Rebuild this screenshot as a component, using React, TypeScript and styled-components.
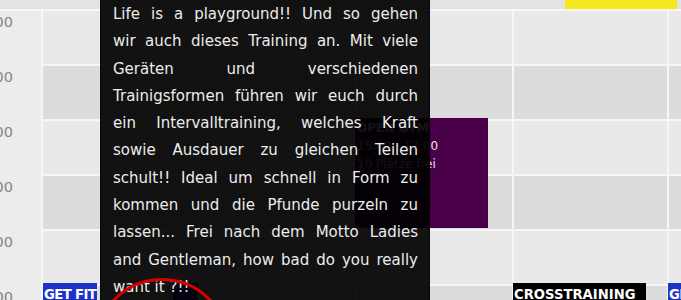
import React from 'react';
import styled, { createGlobalStyle } from 'styled-components';

const GlobalStyle = createGlobalStyle`
  html, body { margin: 0; padding: 0; background: #e9e9e9; }
  body { width: 681px; height: 300px; overflow: hidden; font-family: "DejaVu Sans", Verdana, sans-serif; }
`;

const Page = styled.div`
  position: relative;
  width: 681px;
  height: 300px;
  overflow: hidden;
  background: #e9e9e9;
`;

const Header = styled.div`
  height: 9px;
  background: #e3e3e3;
  display: flex;
  padding-left: 565px;
`;

const TodayMark = styled.div`
  width: 112px;
  background: #f6e81c;
`;

const Body = styled.div`
  display: flex;
  align-items: flex-start;
`;

const TimeCol = styled.div`
  width: 41px;
  flex: none;
  background: #ececec;
  border-top: 2px solid #f6f6f6;
  overflow: hidden;
`;

const TimeLabel = styled.div`
  height: 55px;
  box-sizing: border-box;
  padding: 2px 28px 0 0;
  display: flex;
  justify-content: flex-end;
  font-size: 14.5px;
  line-height: 18px;
  color: #858585;
  white-space: nowrap;
`;

const DayCol = styled.div<{ $w: number }>`
  position: relative;
  width: ${(p) => p.$w}px;
  flex: none;
  border-left: 2px solid #f6f6f6;
`;

const Slot = styled.div<{ $dark: boolean }>`
  height: 53px;
  border-top: 2px solid #f6f6f6;
  background: ${(p) => (p.$dark ? '#dcdcdc' : '#e9e9e9')};
`;

const Event = styled.div<{ $bg: string; $row: number; $left: number; $width?: number; $height: number }>`
  position: absolute;
  top: ${(p) => p.$row * 55 - 1}px;
  left: ${(p) => p.$left}px;
  width: ${(p) => (p.$width ? `${p.$width}px` : 'auto')};
  height: ${(p) => p.$height}px;
  background: ${(p) => p.$bg};
  box-sizing: border-box;
  color: #fff;
`;

const EventTitle = styled.div<{ $indent?: number; $tight?: boolean }>`
  font-weight: bold;
  font-size: 13.2px;
  line-height: 18px;
  letter-spacing: ${(p) => (p.$tight ? '-0.6px' : '0')};
  padding: 3px 1px 0 ${(p) => p.$indent ?? 1}px;
  white-space: nowrap;
`;

const GymBody = styled.div`
  padding: 1px 0 0 2px;
  font-size: 12px;
  line-height: 18px;
`;

const GymTitle = styled.div`
  font-weight: bold;
`;

const GymLine = styled.div`
  color: #e6e6e6;
`;

const Tooltip = styled.div`
  position: absolute;
  left: 100px;
  top: -10px;
  width: 330px;
  height: 340px;
  box-sizing: border-box;
  padding: 10px 11px 0 12px;
  background: rgba(0, 0, 0, 0.925);
  border: 1px solid rgba(0, 0, 0, 0.6);
  color: #ececec;
  font-size: 15px;
  line-height: 27.3px;
`;

const Line = styled.span<{ $last?: boolean }>`
  display: block;
  text-align: justify;
  text-align-last: ${(p) => (p.$last ? 'left' : 'justify')};
`;

const Ring = styled.div`
  position: absolute;
  left: 94px;
  top: 278px;
  width: 136px;
  height: 136px;
  box-sizing: border-box;
  border: 3px solid #d60000;
  border-radius: 50%;
`;

const times = ['13:00', '14:00', '15:00', '16:00', '17:00', '18:00'];
const widths = [155, 155, 155, 153, 20];

const lines = [
  'Life is a playground!! Und so gehen',
  'wir auch dieses Training an. Mit viele',
  'Geräten und verschiedenen',
  'Trainigsformen führen wir euch durch',
  'ein Intervalltraining, welches Kraft',
  'sowie Ausdauer zu gleichen Teilen',
  'schult!! Ideal um schnell in Form zu',
  'kommen und die Pfunde purzeln zu',
  'lassen... Frei nach dem Motto Ladies',
  'and Gentleman, how bad do you really',
  'want it ?!!',
];

function Slots() {
  return (
    <>
      {times.map((t, i) => (
        <Slot key={t} $dark={i % 2 === 1} />
      ))}
    </>
  );
}

export default function App() {
  return (
    <Page>
      <GlobalStyle />
      <Header>
        <TodayMark />
      </Header>
      <Body>
        <TimeCol>
          {times.map((t) => (
            <TimeLabel key={t}>{t}</TimeLabel>
          ))}
        </TimeCol>
        <DayCol $w={widths[0]}>
          <Slots />
          <Event $bg="#1d33c6" $row={5} $left={0} $height={50}>
            <EventTitle $tight>GET FIT</EventTitle>
          </Event>
          <Event $bg="#1d33c6" $row={5} $left={130} $width={159} $height={50}>
            <EventTitle $indent={24} $tight>GET FIT</EventTitle>
          </Event>
        </DayCol>
        <DayCol $w={widths[1]}>
          <Slots />
        </DayCol>
        <DayCol $w={widths[2]}>
          <Slots />
          <Event $bg="#4a0049" $row={2} $left={-2} $width={133} $height={110}>
            <GymBody>
              <GymTitle>OPEN GYM</GymTitle>
              <GymLine>15:00 - 17:00</GymLine>
              <GymLine>10 Plätze frei</GymLine>
            </GymBody>
          </Event>
        </DayCol>
        <DayCol $w={widths[3]}>
          <Slots />
          <Event $bg="#000" $row={5} $left={-1} $width={133} $height={50}>
            <EventTitle>CROSSTRAINING</EventTitle>
          </Event>
        </DayCol>
        <DayCol $w={widths[4]}>
          <Slots />
          <Event $bg="#1d33c6" $row={5} $left={-1} $height={50}>
            <EventTitle $tight>GET FIT</EventTitle>
          </Event>
        </DayCol>
      </Body>
      <Tooltip>
        {lines.map((l, i) => (
          <Line key={i} $last={i === lines.length - 1}>
            {l}
          </Line>
        ))}
      </Tooltip>
      <Ring />
    </Page>
  );
}
